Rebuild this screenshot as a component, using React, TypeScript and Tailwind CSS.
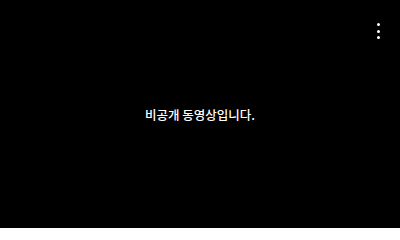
export default function App() {
  return (
    <div className="relative flex h-[228px] w-[400px] items-center justify-center bg-black" style={{ fontFamily: '"Noto Sans CJK KR", "Noto Sans", sans-serif' }}>
      <p className="mt-[3px] text-[12.5px] font-medium text-white">비공개 동영상입니다.</p>
      <button className="absolute right-[18px] top-[21px] flex flex-col items-center gap-[3.5px] p-[2px]">
        <span className="block h-[3px] w-[3px] rounded-full bg-white" />
        <span className="block h-[3px] w-[3px] rounded-full bg-white" />
        <span className="block h-[3px] w-[3px] rounded-full bg-white" />
      </button>
    </div>
  );
}
